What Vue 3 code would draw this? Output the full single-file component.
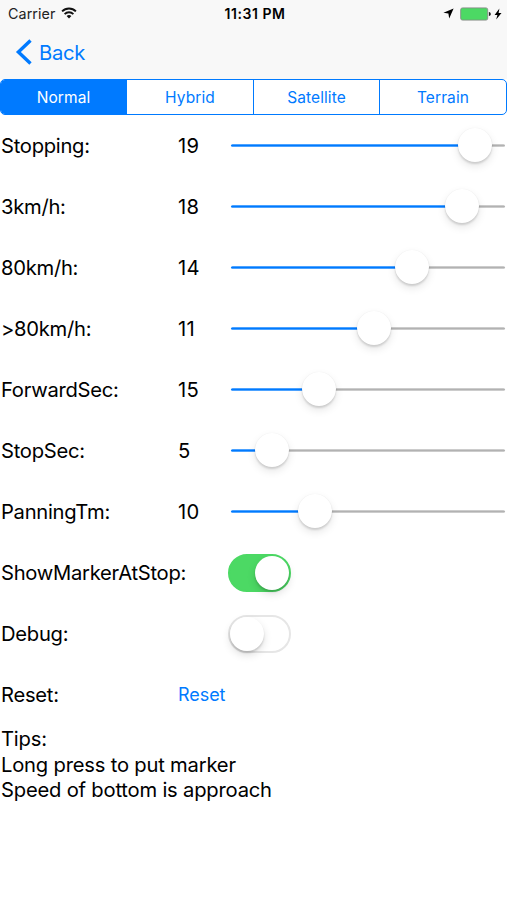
<script setup>
import { ref } from 'vue'

const tabs = ['Normal', 'Hybrid', 'Satellite', 'Terrain']
const active = ref('Normal')

const sliders = [
  { label: 'Stopping:', value: 19, position: 89.2 },
  { label: '3km/h:', value: 18, position: 84.4 },
  { label: '80km/h:', value: 14, position: 66.2 },
  { label: '>80km/h:', value: 11, position: 52.4 },
  { label: 'ForwardSec:', value: 15, position: 32.2 },
  { label: 'StopSec:', value: 5, position: 15.1 },
  { label: 'PanningTm:', value: 10, position: 30.8 },
]

const switches = ref([
  { label: 'ShowMarkerAtStop:', on: true },
  { label: 'Debug:', on: false },
])
</script>

<template>
  <div class="screen">
    <header class="header">
      <div class="status">
        <div class="status-left">
          <span class="carrier">Carrier</span>
          <svg class="wifi" width="16" height="12" viewBox="0 0 16 12">
            <path d="M1.1 4.4a9.7 9.7 0 0 1 13.8 0" fill="none" stroke="#111" stroke-width="1.9" />
            <path d="M3.6 7.1a6.2 6.2 0 0 1 8.8 0" fill="none" stroke="#111" stroke-width="1.8" />
            <path d="M5.6 9.1a3.4 3.4 0 0 1 4.8 0L8 11.6z" fill="#111" />
          </svg>
        </div>
        <span class="clock">11:31 PM</span>
        <div class="status-right">
          <svg class="location" width="11" height="11" viewBox="0 0 11 11">
            <path d="M10.6.4 6.2 10.6 5.4 5.6.4 4.8z" fill="#000" />
          </svg>
          <svg class="battery" width="32" height="14" viewBox="0 0 32 14">
            <rect x=".7" y=".9" width="27" height="12.2" rx="1.8" fill="#4cd964" stroke="#858c86" stroke-width=".9" />
            <path d="M28.9 4.9c1.5.4 1.9 1.2 1.9 2.1s-.4 1.7-1.9 2.1z" fill="#222" />
          </svg>
          <svg class="bolt" width="8" height="12" viewBox="0 0 8 12">
            <path d="M5.4.5.6 7h2.8L2.2 11.5 7.5 4.9H4.6z" fill="#000" />
          </svg>
        </div>
      </div>
      <nav class="nav">
        <svg width="17" height="26" viewBox="0 0 17 26">
          <path d="M15.5 1.6 3.4 13l12.1 11.4" fill="none" stroke="#007aff" stroke-width="3.4" />
        </svg>
        <span class="back">Back</span>
      </nav>
    </header>

    <div class="segments">
      <button
        v-for="tab in tabs"
        :key="tab"
        class="segment"
        :class="{ selected: tab === active }"
        @click="active = tab"
      >{{ tab }}</button>
    </div>

    <main class="rows">
      <div v-for="row in sliders" :key="row.label" class="row">
        <span class="label">{{ row.label }}</span>
        <span class="value">{{ row.value }}</span>
        <div class="slider">
          <div class="fill" :style="{ width: row.position + '%' }"></div>
          <div class="thumb"></div>
          <div class="rest"></div>
        </div>
      </div>
      <div v-for="row in switches" :key="row.label" class="row">
        <span class="label wide">{{ row.label }}</span>
        <button class="switch" :class="{ on: row.on }" @click="row.on = !row.on">
          <span class="knob"></span>
        </button>
      </div>
      <div class="row">
        <span class="label">Reset:</span>
        <button class="reset">Reset</button>
      </div>
    </main>

    <div class="tips">
      <div>Tips:</div>
      <div>Long press to put marker</div>
      <div>Speed of bottom is approach</div>
    </div>
  </div>
</template>

<style>
body {
  margin: 0;
  background: #fff;
}
</style>

<style scoped>
.screen {
  width: 507px;
  height: 900px;
  overflow: hidden;
  background: #fff;
  color: #000;
  font-family: Inter, "Liberation Sans", sans-serif;
  font-size: 20.2px;
  letter-spacing: -0.27px;
}
button {
  padding: 0;
  border: 0;
  background: none;
  font: inherit;
  letter-spacing: inherit;
}
svg {
  display: block;
  flex: none;
}
.header {
  height: 79px;
  background: #f8f8f8;
}
.status {
  display: grid;
  grid-template-columns: 1fr auto 1fr;
  align-items: center;
  height: 27px;
  padding: 0 5px 0 8px;
}
.status-left,
.status-right {
  display: flex;
  align-items: center;
}
.status-right {
  justify-content: flex-end;
}
.carrier {
  font-size: 14.3px;
  letter-spacing: 0.08px;
  color: #222;
}
.wifi {
  margin-left: 6px;
  margin-top: -2px;
}
.clock {
  font-size: 14px;
  font-weight: 600;
  letter-spacing: 0.55px;
}
.location {
  margin-right: 6px;
}
.bolt {
  margin-left: 2px;
}
.nav {
  display: flex;
  align-items: center;
  gap: 7px;
  height: 50px;
  padding-left: 15px;
}
.back {
  color: #007aff;
}
.segments {
  display: grid;
  grid-template-columns: 125px 127px 126px 1fr;
  box-sizing: border-box;
  height: 36px;
  border: 1.5px solid #007aff;
  border-radius: 5px;
  overflow: hidden;
  background: #fff;
}
.segment {
  color: #007aff;
  font-size: 15.5px;
  letter-spacing: 0.1px;
}
.segment + .segment {
  border-left: 1px solid #007aff;
}
.segment.selected {
  background: #007aff;
  color: #fff;
}
.row {
  display: flex;
  align-items: center;
  height: 61.05px;
}
.label {
  width: 177px;
  padding-left: 1px;
  white-space: nowrap;
}
.label.wide {
  width: 227px;
}
.value {
  width: 53px;
  letter-spacing: 0.2px;
}
.slider {
  display: flex;
  align-items: center;
  width: 273.5px;
  height: 35px;
  margin-top: -1px;
}
.fill,
.rest {
  height: 3px;
  border-radius: 2px;
}
.fill {
  flex: none;
  background: linear-gradient(#4ca2ff 33%, #007aff 33% 67%, #4ca2ff 67%);
}
.rest {
  flex: 1;
  background: linear-gradient(#cccccc 33%, #b2b2b2 33% 67%, #cccccc 67%);
}
.thumb {
  flex: none;
  z-index: 1;
  width: 34px;
  height: 34px;
  margin: 0 -17px;
  border-radius: 50%;
  background: #fff;
  box-shadow: 0 0 1px rgba(0, 0, 0, 0.08), 0 2px 2px rgba(0, 0, 0, 0.13), 0 4px 9px rgba(0, 0, 0, 0.1);
}
.switch {
  display: flex;
  align-items: center;
  box-sizing: border-box;
  width: 63px;
  height: 38px;
  border: 2px solid #e6e6e6;
  border-radius: 19px;
}
.switch.on {
  justify-content: flex-end;
  border-color: #4cd964;
  background: #4cd964;
}
.knob {
  width: 34px;
  height: 34px;
  border-radius: 50%;
  background: #fff;
  box-shadow: 0 2px 2px rgba(0, 0, 0, 0.14), 0 4px 9px rgba(0, 0, 0, 0.13);
}
.reset {
  color: #007aff;
  font-size: 18px;
  letter-spacing: -0.05px;
}
.tips {
  padding: 0.5px 0 0 1px;
  line-height: 25.7px;
  letter-spacing: -0.2px;
}
</style>
